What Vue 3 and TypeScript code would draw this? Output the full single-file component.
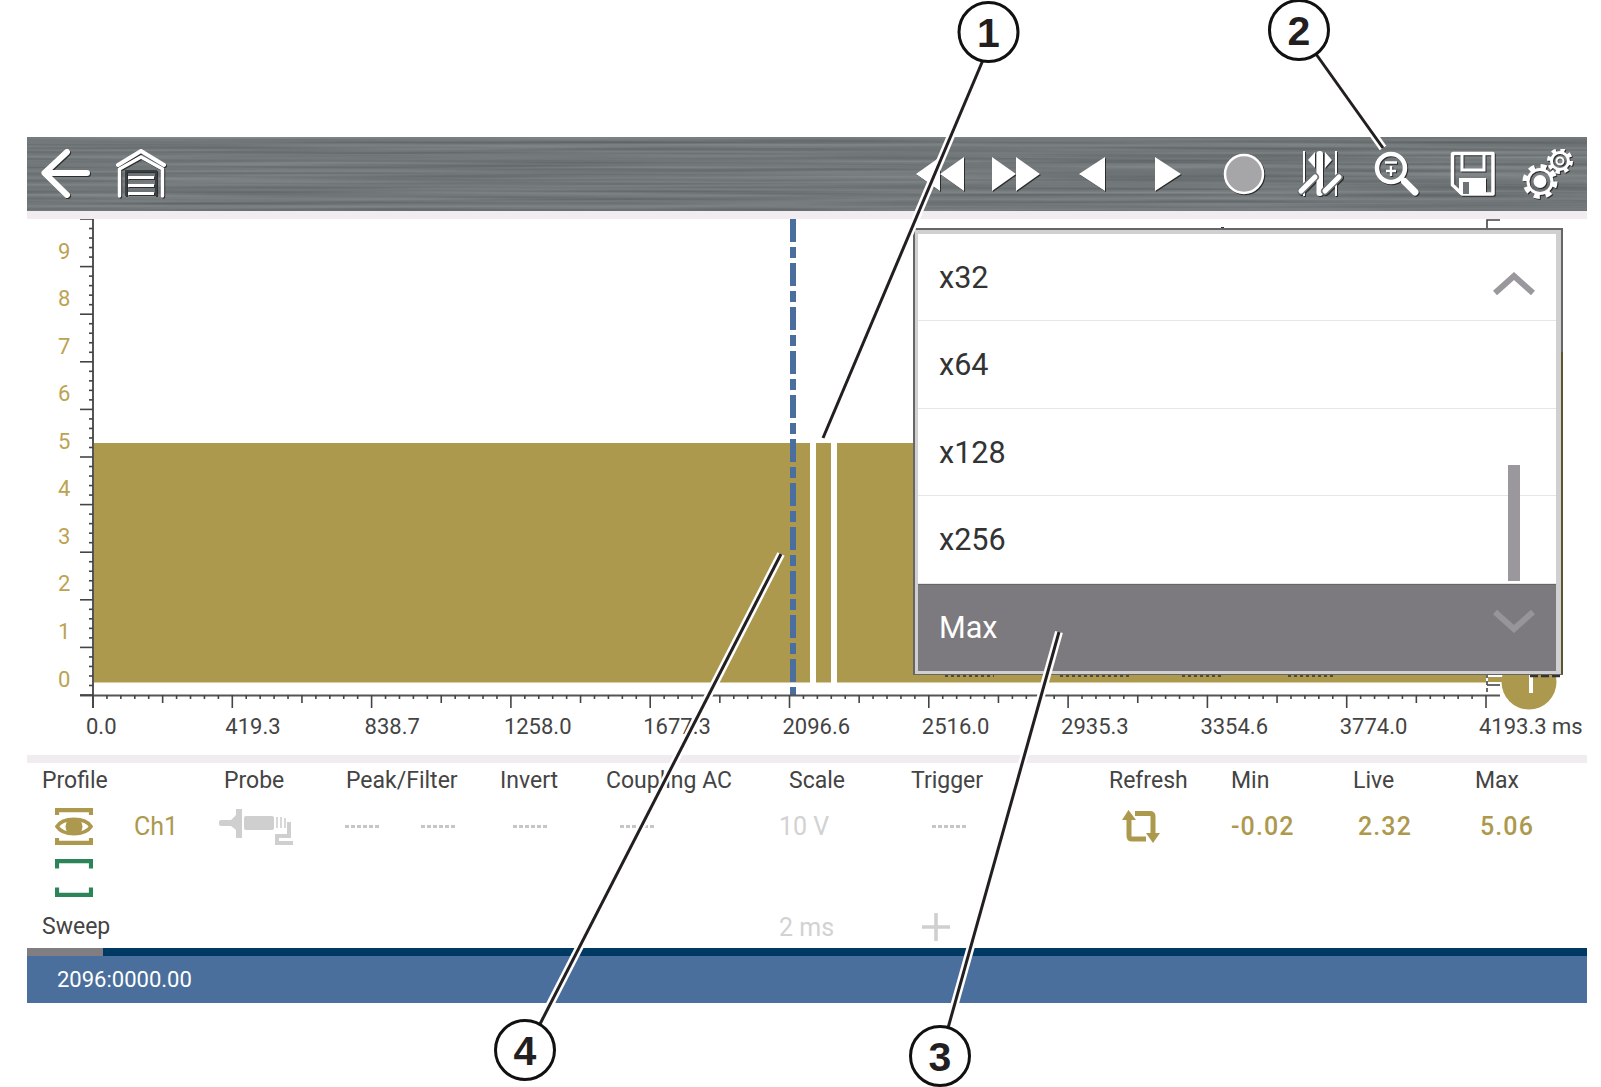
<script setup lang="ts">
const X0 = 93
const XSTEP = 139.3
const xLabels: string[] = ['0.0', '419.3', '838.7', '1258.0', '1677.3', '2096.6', '2516.0', '2935.3', '3354.6', '3774.0', '4193.3 ms']
const xTicks = Array.from({ length: 101 }, (_, i) => {
  const len = i % 10 === 0 ? 13 : i % 5 === 0 ? 8 : 4
  return { x: X0 + (XSTEP / 10) * i, len }
})
const yTicks = Array.from({ length: 51 }, (_, i) => {
  return { y: 219 + 9.52 * i, x1: i % 5 === 0 ? 80 : 89 }
})
const yLabels = Array.from({ length: 10 }, (_, n) => ({ n, y: 686.5 - 47.55 * n }))
const waves = [
  { x: 94, w: 716 },
  { x: 816, w: 15 },
  { x: 837, w: 649 },
]
const rows = ['x32', 'x64', 'x128', 'x256', 'Max']
const callouts = [
  { n: 1, cx: 988.5, cy: 32, x1: 983, y1: 60, x2: 823, y2: 438 },
  { n: 2, cx: 1299, cy: 30, x1: 1316, y1: 54, x2: 1383, y2: 148 },
  { n: 3, cx: 940, cy: 1056, x1: 948, y1: 1028, x2: 1059, y2: 632 },
  { n: 4, cx: 525, cy: 1050, x1: 540, y1: 1024, x2: 781, y2: 554 },
]
</script>

<template>
  <div class="page">
    <div class="frame">
      <header class="toolbar">
        <svg class="brushed" width="1560" height="74" aria-hidden="true">
          <filter id="brush" x="0" y="0" width="100%" height="100%" color-interpolation-filters="sRGB">
            <feTurbulence type="fractalNoise" baseFrequency="0.003 0.28" numOctaves="2" seed="5" />
            <feColorMatrix type="matrix" values="0.2 0 0 0 0.345  0.2 0 0 0 0.365  0.2 0 0 0 0.375  0 0 0 0 1" />
          </filter>
          <rect width="1560" height="74" filter="url(#brush)" />
        </svg>

        <div class="nav-left">
          <svg class="ico" width="52" height="52" viewBox="0 0 52 52">
            <path d="M47 25H6M27 4L4.5 25L27 47" fill="none" stroke="#fff" stroke-width="6" stroke-linecap="round" stroke-linejoin="round" />
          </svg>
          <svg class="ico home" width="52" height="52" viewBox="0 0 52 52">
            <path d="M3 17L26 3L49 17" fill="none" stroke="#fff" stroke-width="4" stroke-linecap="round" stroke-linejoin="round" />
            <path d="M4.5 48V21L26 9L47.5 21V48" fill="none" stroke="#fff" stroke-width="3.4" stroke-linejoin="round" stroke-linecap="round" />
            <path d="M11 48V23H41V48" fill="none" stroke="#3c3f41" stroke-width="2" />
            <path d="M13 29.5H39M13 37.5H39M13 45.5H39" stroke="#fff" stroke-width="3.2" />
          </svg>
        </div>

        <div class="nav-right">
          <button class="tbtn">
            <svg class="ico" width="50" height="36" viewBox="0 0 50 36"><path d="M25 1L1 18L25 35ZM49 1L25 18L49 35Z" fill="#fff" /></svg>
          </button>
          <button class="tbtn">
            <svg class="ico" width="50" height="36" viewBox="0 0 50 36"><path d="M1 1L25 18L1 35ZM25 1L49 18L25 35Z" fill="#fff" /></svg>
          </button>
          <button class="tbtn">
            <svg class="ico" width="28" height="36" viewBox="0 0 28 36"><path d="M27 1L1 18L27 35Z" fill="#fff" /></svg>
          </button>
          <button class="tbtn">
            <svg class="ico" width="28" height="36" viewBox="0 0 28 36"><path d="M1 1L27 18L1 35Z" fill="#fff" /></svg>
          </button>
          <button class="tbtn">
            <svg class="ico" width="42" height="42" viewBox="0 0 42 42"><circle cx="21" cy="21" r="19" fill="#a6a6a8" stroke="#fff" stroke-width="2.5" /></svg>
          </button>
          <button class="tbtn">
            <svg class="ico" width="46" height="48" viewBox="0 0 46 48">
              <path d="M7 1V46M39 1V46" stroke="#fff" stroke-width="2" />
              <rect x="19.5" y="1" width="6.5" height="45" rx="3" fill="#fff" />
              <path d="M18 2L11 10L18 18ZM28 2L35 10L28 18Z" fill="#fff" />
              <path d="M4 41L18 27M28 41L42 27" stroke="#6d7376" stroke-width="8" stroke-linecap="round" />
              <path d="M4 41L18 27M28 41L42 27" stroke="#fff" stroke-width="5" stroke-linecap="round" />
            </svg>
          </button>
          <button class="tbtn">
            <svg class="ico" width="46" height="46" viewBox="0 0 46 46">
              <circle cx="18" cy="17" r="14" fill="none" stroke="#fff" stroke-width="4.5" />
              <path d="M31.5 30.5L42 41" stroke="#fff" stroke-width="7" stroke-linecap="round" />
              <path d="M12 11.5H24M18 15V25M13 20H23" stroke="#fff" stroke-width="2.4" />
            </svg>
          </button>
          <button class="tbtn">
            <svg class="ico" width="48" height="48" viewBox="0 0 48 48">
              <path d="M5 3.5H45V44H14L4.5 35V4Z" fill="none" stroke="#fff" stroke-width="3.5" stroke-linejoin="round" />
              <path d="M14 4V20H36V4" fill="none" stroke="#fff" stroke-width="3" />
              <path d="M11 28H38V44H11Z" fill="#fff" />
              <rect x="15" y="32" width="6" height="12" fill="#6d7376" />
            </svg>
          </button>
          <button class="tbtn">
            <svg class="ico" width="52" height="50" viewBox="0 0 52 50">
              <circle cx="18" cy="32.5" r="15" fill="none" stroke="#fff" stroke-width="5" stroke-dasharray="5.9 5.9" />
              <circle cx="18" cy="32.5" r="12" fill="none" stroke="#fff" stroke-width="3" />
              <circle cx="18" cy="32.5" r="6.5" fill="#fff" />
              <circle cx="38" cy="12" r="11" fill="none" stroke="#fff" stroke-width="4" stroke-dasharray="4.3 4.34" />
              <circle cx="38" cy="12" r="8.5" fill="none" stroke="#fff" stroke-width="3" />
              <circle cx="38" cy="12" r="3.5" fill="#fff" fill-opacity="0.25" stroke="#fff" stroke-width="2" />
            </svg>
          </button>
        </div>
      </header>

      <div class="band"></div>

      <section class="chart">
        <svg class="plot" width="1560" height="536" viewBox="27 219 1560 536">
          <rect v-for="w in waves" :key="w.x" :x="w.x" y="443" :width="w.w" height="239.5" fill="#ad994d" />
          <rect x="1488" y="677" width="16" height="5" fill="#ad994d" />
          <circle cx="1529" cy="682" r="27.5" fill="#ad994d" />
          <rect x="1529" y="674" width="4" height="19" fill="#fff" />

          <path d="M793 219V695" stroke="#4a6f9f" stroke-width="6" stroke-dasharray="23 5 11 5" />

          <path d="M93 219V708M80 695.5H1500" stroke="#555" stroke-width="2" fill="none" />
          <path v-for="t in yTicks" :key="t.y" :d="`M${t.x1} ${t.y}H93`" stroke="#444" stroke-width="1.6" />
          <path v-for="t in xTicks" :key="t.x" :d="`M${t.x} 695V${695 + t.len}`" stroke="#444" stroke-width="1.6" />
          <path d="M1487 228V220H1500" stroke="#444" stroke-width="1.6" fill="none" />
          <path d="M1487 674V695" stroke="#444" stroke-width="1.6" stroke-dasharray="4 3" />
          <path d="M1487 685H1500" stroke="#444" stroke-width="1.6" />
          <rect x="1221" y="227" width="3" height="1" fill="#1a3a63" />
          <path d="M945 676H994M1060 676H1131M1182 676H1222M1288 676H1335" stroke="#333" stroke-width="1.5" stroke-dasharray="3 3" />
          <path d="M1530 676H1562" stroke="#333" stroke-width="2.5" stroke-dasharray="8 3" />

          <text v-for="l in yLabels" :key="l.n" class="ylabel" x="58" :y="l.y">{{ l.n }}</text>
          <text v-for="(l, i) in xLabels" :key="l" class="xlabel" :x="X0 + XSTEP * i - 7" y="734">{{ l }}</text>
        </svg>

        <div class="popup">
          <div class="popup-inner">
            <div v-for="(r, i) in rows" :key="r" class="row" :class="{ active: r === 'Max' }">
              <span>{{ r }}</span>
              <svg v-if="i === 0" class="chev up" width="42" height="24" viewBox="0 0 42 24">
                <path d="M2 21L21 4L40 21" fill="none" stroke="#9a989c" stroke-width="6" />
              </svg>
              <svg v-if="i === 4" class="chev down" width="42" height="24" viewBox="0 0 42 24">
                <path d="M2 3L21 20L40 3" fill="none" stroke="#979599" stroke-width="6" />
              </svg>
            </div>
          </div>
          <div class="scrollbar"></div>
          <div class="edge"></div>
        </div>
      </section>

      <div class="band"></div>

      <section class="params">
        <span class="head c1">Profile</span>
        <span class="head c3 p6">Probe</span>
        <span class="head c4 p2">Peak/Filter</span>
        <span class="head c6">Invert</span>
        <span class="head c7">Coupling AC</span>
        <span class="head c8 p10">Scale</span>
        <span class="head c9">Trigger</span>
        <span class="head c10">Refresh</span>
        <span class="head c11">Min</span>
        <span class="head c12">Live</span>
        <span class="head c13">Max</span>

        <svg class="r2 c1 p13" width="38" height="37" viewBox="0 0 38 37">
          <path d="M2 7V2.2H36V7M2 30V34.8H36V30" fill="none" stroke="#ad994d" stroke-width="4.2" />
          <path d="M2 18.5C8 9 30 9 36 18.5C30 28 8 28 2 18.5Z" fill="none" stroke="#ad994d" stroke-width="3.6" />
          <circle cx="19" cy="18.5" r="8.5" fill="#ad994d" />
        </svg>
        <span class="r2 c2 ch">Ch1</span>
        <svg class="r2 c3" width="76" height="37" viewBox="0 0 76 37">
          <rect x="0" y="12" width="17" height="6" rx="2" fill="#cfcfcf" />
          <path d="M12 12L17 7V1H23V30H17V22L12 18Z" fill="#cfcfcf" />
          <rect x="25" y="8" width="30" height="14" rx="2" fill="#cfcfcf" />
          <path d="M58 9V20M62 9V20M66 10V20" stroke="#cfcfcf" stroke-width="1.6" />
          <path d="M70 14V28H58V35H74" fill="none" stroke="#cfcfcf" stroke-width="4" />
        </svg>
        <i class="r2 c4 dash"></i>
        <i class="r2 c5 dash"></i>
        <i class="r2 c6 dash p13"></i>
        <i class="r2 c7 dash p14"></i>
        <span class="r2 c8 off">10 V</span>
        <i class="r2 c9 dash p21"></i>
        <svg class="r2 c10 p13" width="38" height="33" viewBox="0 0 38 33">
          <path d="M7 9V26Q7 29 10 29H24M13 3.5H28Q31 3.5 31 6.5V24" fill="none" stroke="#ad994d" stroke-width="5" />
          <path d="M6.5 0L14 10H0ZM31 33L38 23H24Z" fill="#ad994d" />
        </svg>
        <span class="r2 c11 val">-0.02</span>
        <span class="r2 c12 val p5">2.32</span>
        <span class="r2 c13 val p5">5.06</span>

        <svg class="r3 c1 p13" width="38" height="38" viewBox="0 0 38 38">
          <path d="M2 9.5V2.2H36V9.5M2 28.5V35.8H36V28.5" fill="none" stroke="#2c8559" stroke-width="4.2" />
        </svg>

        <span class="head r4 c1">Sweep</span>
        <span class="r4 c8 off">2 ms</span>
        <svg class="r4 c9 p10" width="30" height="30" viewBox="0 0 30 30">
          <path d="M15 1V29M1 15H29" stroke="#cfcfcf" stroke-width="3.6" />
        </svg>
      </section>

      <div class="strip"><div class="strip-thumb"></div></div>
      <footer class="status">2096:0000.00</footer>
    </div>

    <svg class="callouts" width="1601" height="1087" viewBox="0 0 1601 1087" aria-hidden="true">
      <g v-for="c in callouts" :key="c.n">
        <line :x1="c.x1" :y1="c.y1" :x2="c.x2" :y2="c.y2" stroke="#fff" stroke-width="8" />
        <line :x1="c.x1" :y1="c.y1" :x2="c.x2" :y2="c.y2" stroke="#231f20" stroke-width="3" />
        <circle :cx="c.cx" :cy="c.cy" r="29.5" fill="#fff" stroke="#111" stroke-width="3" />
        <text class="num" :x="c.cx" :y="c.cy + 14.5" text-anchor="middle">{{ c.n }}</text>
      </g>
    </svg>
  </div>
</template>

<style scoped>
.page {
  position: relative;
  width: 1601px;
  height: 1087px;
  box-sizing: border-box;
  padding-top: 137px;
  background: #fff;
  font-family: Roboto, "Liberation Sans", sans-serif;
  overflow: hidden;
}
.frame {
  width: 1560px;
  margin-left: 27px;
}
.toolbar {
  position: relative;
  height: 74px;
  display: flex;
  align-items: center;
  justify-content: space-between;
  background: #6d7376;
  border-bottom: 1px solid #c9c9c9;
  box-sizing: border-box;
}
.brushed {
  position: absolute;
  left: 0;
  top: 0;
}
.nav-left {
  position: relative;
  display: flex;
  align-items: center;
  gap: 23px;
  padding-left: 13px;
}
.nav-right {
  position: relative;
  display: flex;
  align-items: center;
  padding-right: 1px;
}
.tbtn {
  width: 76px;
  height: 52px;
  padding: 0;
  border: 0;
  background: none;
  display: flex;
  align-items: center;
  justify-content: center;
}
.ico {
  display: block;
  filter: drop-shadow(1px 1px 0.6px rgba(20, 20, 20, 0.75));
}
.band {
  height: 8px;
  background: #f0ecf0;
}
.chart {
  position: relative;
  height: 536px;
}
.plot {
  display: block;
}
.ylabel {
  font-family: Roboto, sans-serif;
  font-size: 22px;
  fill: #bca352;
}
.xlabel {
  font-family: Roboto, sans-serif;
  font-size: 22px;
  fill: #444;
}
.popup {
  position: absolute;
  left: 886px;
  top: 9px;
  width: 650px;
  height: 447px;
  box-sizing: border-box;
  border: 2px solid #666;
  border-bottom-width: 1px;
  background: #d0d0d0;
}
.popup-inner {
  box-sizing: border-box;
  height: 100%;
  padding: 4px 5px 3px 3px;
  display: flex;
  flex-direction: column;
}
.row {
  flex: 1;
  display: flex;
  align-items: center;
  justify-content: space-between;
  padding: 0 21px 0 21px;
  background: #fff;
  border-bottom: 1px solid #e6e6e6;
  font-size: 30.6px;
  color: #333;
}
.row.active {
  background: #7c7a7e;
  border-bottom: 0;
  border-top: 1px solid #666;
  color: #fff;
}
.chev.up {
  transform: translateY(7px);
}
.chev.down {
  transform: translateY(-7px);
}
.scrollbar {
  position: absolute;
  left: 593px;
  top: 235px;
  width: 12px;
  height: 116px;
  background: #9a989c;
}
.edge {
  position: absolute;
  right: -2px;
  top: 122px;
  bottom: 0;
  width: 2px;
  background: #5d5530;
}
.params {
  height: 185px;
  display: grid;
  grid-template-columns: 92px 85px 126px 76px 79px 106px 173px 132px 198px 122px 122px 122px 1fr;
  grid-template-rows: 35px 57px 45px 48px;
  padding-left: 15px;
  box-sizing: border-box;
  align-items: center;
  justify-items: start;
}
.head {
  grid-row: 1;
  font-size: 23px;
  line-height: 32px;
  color: #444;
  white-space: nowrap;
}
.r2 { grid-row: 2; }
.r3 { grid-row: 3; }
.r4 { grid-row: 4; padding-top: 6px; }
.c1 { grid-column: 1; }
.c2 { grid-column: 2; }
.c3 { grid-column: 3; }
.c4 { grid-column: 4; }
.c5 { grid-column: 5; }
.c6 { grid-column: 6; }
.c7 { grid-column: 7; }
.c8 { grid-column: 8; }
.c9 { grid-column: 9; }
.c10 { grid-column: 10; }
.c11 { grid-column: 11; }
.c12 { grid-column: 12; }
.c13 { grid-column: 13; }
.p2 { margin-left: 1px; }
.p5 { margin-left: 5px; }
.p6 { margin-left: 5px; }
.p10 { margin-left: 10px; }
.p13 { margin-left: 13px; }
.p14 { margin-left: 14px; }
.p21 { margin-left: 21px; }
.ch {
  font-size: 25px;
  color: #ad994d;
}
.off {
  font-size: 25px;
  color: #d2d2d2;
}
.val {
  font-size: 25px;
  font-weight: 500;
  letter-spacing: 1.1px;
  color: #ad994d;
}
.dash {
  width: 36px;
  height: 3px;
  background: repeating-linear-gradient(90deg, #c6c6c6 0 4px, transparent 4px 6px);
}
.strip {
  height: 8px;
  background: #003a63;
}
.strip-thumb {
  width: 76px;
  height: 100%;
  background: #807e80;
}
.status {
  height: 47px;
  box-sizing: border-box;
  padding-left: 30px;
  display: flex;
  align-items: center;
  background: #4b6f9c;
  color: #fff;
  font-size: 22px;
}
.callouts {
  position: absolute;
  left: 0;
  top: 0;
  pointer-events: none;
}
.num {
  font-family: "Liberation Sans", sans-serif;
  font-weight: 700;
  font-size: 41px;
  fill: #231f20;
}
</style>

<style>
html,
body {
  margin: 0;
  background: #fff;
}
</style>
